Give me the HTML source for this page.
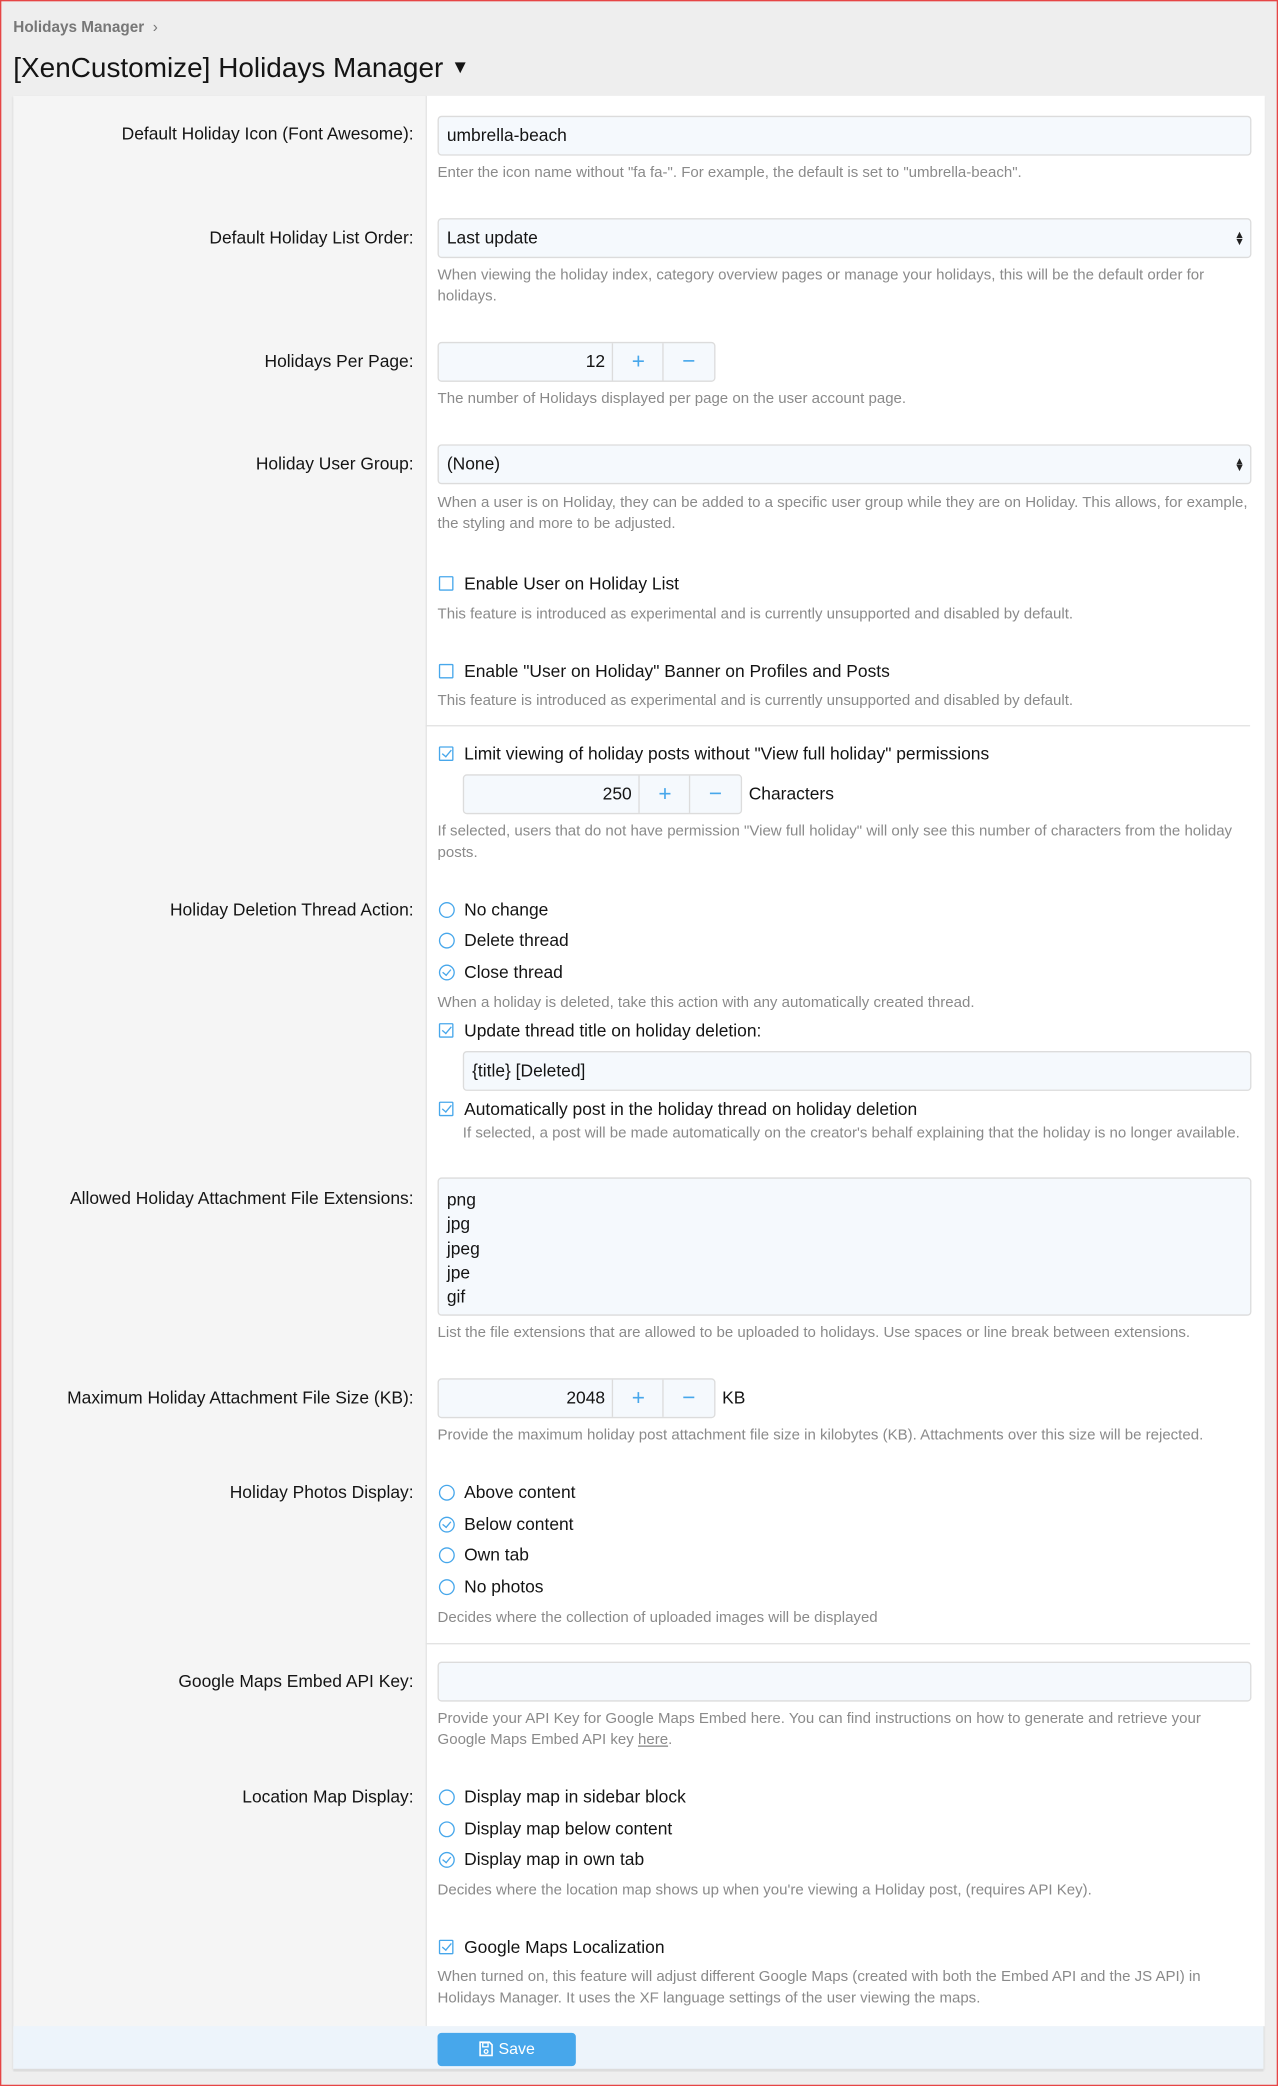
<!DOCTYPE html>
<html><head><meta charset="utf-8">
<style>
html,body{margin:0;padding:0;width:1278px;height:2086px;overflow:hidden;background:#eeeeee}
#w{position:absolute;left:0;top:0;width:961px;height:1568px;transform:scale(1.3299,1.3304);transform-origin:0 0;font-family:"Liberation Sans",sans-serif;color:#141414}
.frame{position:absolute;left:0;top:0;width:959px;height:1566px;border:1px solid #e64545}
.panel{position:absolute;left:10px;top:72px;width:940px;height:1483px;background:#f5f5f5;box-shadow:0 1px 2px rgba(0,0,0,.15)}
.right{position:absolute;left:320px;top:72px;width:630px;height:1451px;background:#fff;border-left:1px solid #e4e4e4}
.foot{position:absolute;left:10px;top:1523px;width:940px;height:32px;background:#edf4fb;border-bottom:2px solid #dcdcdc}
.l{position:absolute;right:650px;font-size:13.1px;line-height:16px;white-space:nowrap}
.t{position:absolute;left:349px;font-size:13.1px;line-height:16px;white-space:nowrap}
.h{position:absolute;left:329px;width:612px;font-size:11.3px;line-height:16px;color:#8a8a8a}
.in{position:absolute;background:#f5f9fd;border:1px solid #dcdcdc;border-radius:3px;box-sizing:border-box;font-size:13.1px;padding-left:6px}
.cb{position:absolute;left:330px;width:11px;height:11px;border:1.3px solid #47a7eb;box-sizing:border-box;border-radius:1px;background:#fff}
.cb.c::after{content:"";position:absolute;left:2.5px;top:0px;width:3px;height:6px;border:solid #47a7eb;border-width:0 1.4px 1.4px 0;transform:rotate(40deg)}
.rd{position:absolute;left:330px;width:12px;height:12px;border:1.3px solid #47a7eb;box-sizing:border-box;border-radius:50%;background:#fff}
.rd.c::after{content:"";position:absolute;left:3px;top:0.5px;width:2.5px;height:5px;border:solid #47a7eb;border-width:0 1.3px 1.3px 0;transform:rotate(40deg)}
.sep{position:absolute;left:320px;width:620px;height:1px;background:#e2e2e2}
.num{position:absolute;height:30px;box-sizing:border-box;background:#f5f9fd;border:1px solid #dcdcdc;border-radius:3px}
.num .v{position:absolute;right:82px;top:6px;font-size:13.1px;line-height:16px}
.num .p,.num .m{position:absolute;top:0;width:38px;height:28px;border-left:1px solid #dcdcdc;color:#47a7eb;font-size:17px;text-align:center;line-height:27px}
.num .p{right:38px}.num .m{right:0}
.arr{position:absolute;right:4px;top:9px;font-size:8px;line-height:5px;color:#222}
</style></head><body><div id="w">
<div class="frame"></div>
<div style="position:absolute;left:10px;top:15px;font-size:11.5px;font-weight:bold;color:#777">Holidays Manager &nbsp;<span style="font-weight:normal">›</span></div>
<div style="position:absolute;left:10px;top:39px;font-size:21px;line-height:26px;color:#141414">[XenCustomize] Holidays Manager <span style="font-size:14px;position:relative;top:-3px">▼</span></div>
<div class="panel"></div>
<div class="right"></div>
<div class="foot"></div>
<div style="position:absolute;left:329px;top:1528px;width:104px;height:25px;background:#47a7eb;border-radius:3px;color:#fff;font-size:12px;line-height:25px;text-align:center">
<svg width="11" height="12" viewBox="0 0 11 12" style="vertical-align:-2px;margin-right:4px"><path d="M1 1h7l2 2v8H1z" fill="none" stroke="#fff" stroke-width="1.2"/><rect x="3" y="1.5" width="4" height="3" fill="none" stroke="#fff"/><circle cx="5.5" cy="8" r="1.4" fill="none" stroke="#fff"/></svg>Save</div>

<div class="l" style="top:93px">Default Holiday Icon (Font Awesome):</div>
<div class="in" style="left:329px;top:87px;width:612px;height:30px;line-height:28px">umbrella-beach</div>
<div class="h" style="top:122px">Enter the icon name without "fa fa-". For example, the default is set to "umbrella-beach".</div>

<div class="l" style="top:171px">Default Holiday List Order:</div>
<div class="in" style="left:329px;top:164px;width:612px;height:30px;line-height:28px">Last update<div class="arr">▲<br>▼</div></div>
<div class="h" style="top:199px">When viewing the holiday index, category overview pages or manage your holidays, this will be the default order for holidays.</div>

<div class="l" style="top:264px">Holidays Per Page:</div>
<div class="num" style="left:329px;top:257px;width:209px"><span class="v">12</span><div class="p">+</div><div class="m">−</div></div>
<div class="h" style="top:292px">The number of Holidays displayed per page on the user account page.</div>

<div class="l" style="top:341px">Holiday User Group:</div>
<div class="in" style="left:329px;top:334px;width:612px;height:30px;line-height:28px">(None)<div class="arr">▲<br>▼</div></div>
<div class="h" style="top:370px">When a user is on Holiday, they can be added to a specific user group while they are on Holiday. This allows, for example, the styling and more to be adjusted.</div>

<div class="cb" style="top:433px"></div><div class="t" style="top:431px">Enable User on Holiday List</div>
<div class="h" style="top:454px">This feature is introduced as experimental and is currently unsupported and disabled by default.</div>
<div class="cb" style="top:499px"></div><div class="t" style="top:497px">Enable "User on Holiday" Banner on Profiles and Posts</div>
<div class="h" style="top:519px">This feature is introduced as experimental and is currently unsupported and disabled by default.</div>
<div class="sep" style="top:545px"></div>

<div class="cb c" style="top:561px"></div><div class="t" style="top:559px">Limit viewing of holiday posts without "View full holiday" permissions</div>
<div class="num" style="left:348px;top:582px;width:210px"><span class="v">250</span><div class="p">+</div><div class="m">−</div></div>
<div class="t" style="left:563px;top:589px">Characters</div>
<div class="h" style="top:617px">If selected, users that do not have permission "View full holiday" will only see this number of characters from the holiday posts.</div>

<div class="l" style="top:676px">Holiday Deletion Thread Action:</div>
<div class="rd" style="top:678px"></div><div class="t" style="top:676px">No change</div>
<div class="rd" style="top:701px"></div><div class="t" style="top:699px">Delete thread</div>
<div class="rd c" style="top:725px"></div><div class="t" style="top:723px">Close thread</div>
<div class="h" style="top:746px">When a holiday is deleted, take this action with any automatically created thread.</div>
<div class="cb c" style="top:769px"></div><div class="t" style="top:767px">Update thread title on holiday deletion:</div>
<div class="in" style="left:348px;top:790px;width:593px;height:30px;line-height:28px">{title} [Deleted]</div>
<div class="cb c" style="top:828px"></div><div class="t" style="top:826px">Automatically post in the holiday thread on holiday deletion</div>
<div class="h" style="left:348px;width:600px;top:844px;white-space:nowrap">If selected, a post will be made automatically on the creator's behalf explaining that the holiday is no longer available.</div>

<div class="l" style="top:893px">Allowed Holiday Attachment File Extensions:</div>
<div class="in" style="left:329px;top:885px;width:612px;height:104px;padding-top:7px;line-height:18.3px">png<br>jpg<br>jpeg<br>jpe<br>gif</div>
<div class="h" style="top:994px">List the file extensions that are allowed to be uploaded to holidays. Use spaces or line break between extensions.</div>

<div class="l" style="top:1043px">Maximum Holiday Attachment File Size (KB):</div>
<div class="num" style="left:329px;top:1036px;width:209px"><span class="v">2048</span><div class="p">+</div><div class="m">−</div></div>
<div class="t" style="left:543px;top:1043px">KB</div>
<div class="h" style="top:1071px;white-space:nowrap">Provide the maximum holiday post attachment file size in kilobytes (KB). Attachments over this size will be rejected.</div>

<div class="l" style="top:1114px">Holiday Photos Display:</div>
<div class="rd" style="top:1116px"></div><div class="t" style="top:1114px">Above content</div>
<div class="rd c" style="top:1140px"></div><div class="t" style="top:1138px">Below content</div>
<div class="rd" style="top:1163px"></div><div class="t" style="top:1161px">Own tab</div>
<div class="rd" style="top:1187px"></div><div class="t" style="top:1185px">No photos</div>
<div class="h" style="top:1208px">Decides where the collection of uploaded images will be displayed</div>
<div class="sep" style="top:1235px"></div>

<div class="l" style="top:1256px">Google Maps Embed API Key:</div>
<div class="in" style="left:329px;top:1249px;width:612px;height:30px"></div>
<div class="h" style="top:1284px">Provide your API Key for Google Maps Embed here. You can find instructions on how to generate and retrieve your Google Maps Embed API key <u>here</u>.</div>

<div class="l" style="top:1343px">Location Map Display:</div>
<div class="rd" style="top:1345px"></div><div class="t" style="top:1343px">Display map in sidebar block</div>
<div class="rd" style="top:1369px"></div><div class="t" style="top:1367px">Display map below content</div>
<div class="rd c" style="top:1392px"></div><div class="t" style="top:1390px">Display map in own tab</div>
<div class="h" style="top:1413px">Decides where the location map shows up when you're viewing a Holiday post, (requires API Key).</div>

<div class="cb c" style="top:1458px"></div><div class="t" style="top:1456px">Google Maps Localization</div>
<div class="h" style="top:1478px">When turned on, this feature will adjust different Google Maps (created with both the Embed API and the JS API) in Holidays Manager. It uses the XF language settings of the user viewing the maps.</div>
</div></body></html>
